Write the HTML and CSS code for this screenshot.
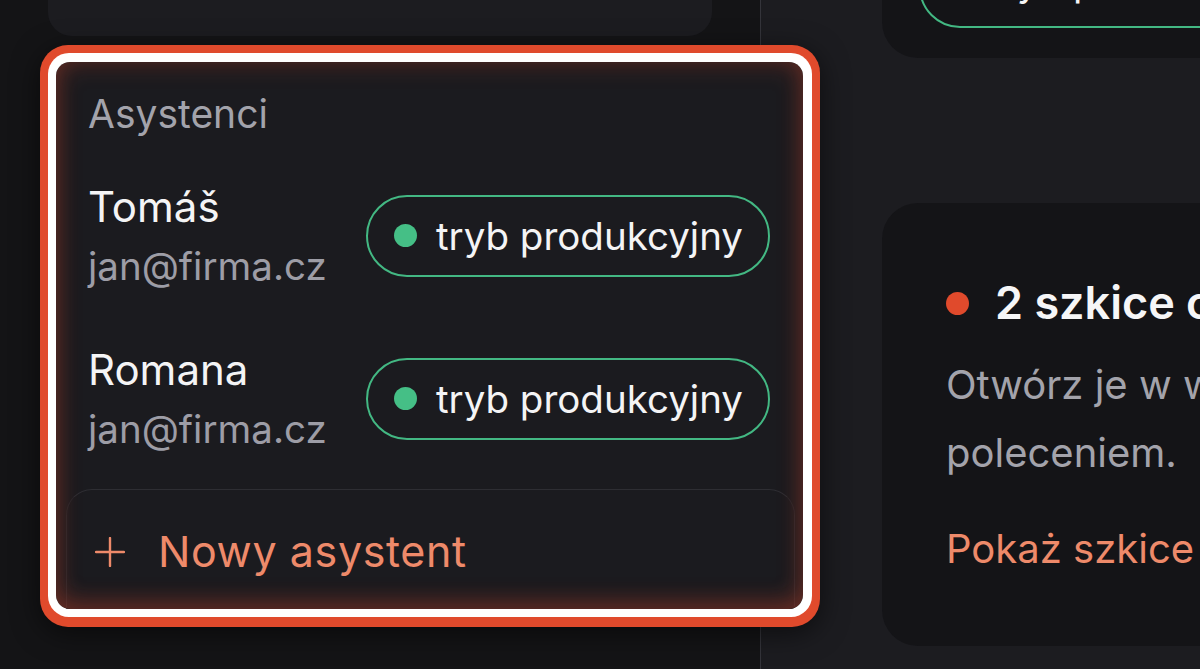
FILE: index.html
```html
<!DOCTYPE html>
<html lang="pl">
<head>
<meta charset="utf-8">
<title>Asystenci</title>
<link rel="stylesheet" href="styles.css">
</head>
<body>
<div class="app">
  <aside class="sidebar">
    <div class="side-card">
      <span class="side-card-text">Szukaj w projekcie</span>
    </div>

    <div class="hl">
      <div class="hl-ring">
        <section class="panel">
          <h2 class="panel-title">Asystenci</h2>
          <ul class="list">
            <li class="row">
              <div class="who">
                <div class="name">Tomáš</div>
                <div class="mail">jan@firma.cz</div>
              </div>
              <span class="pill"><span class="dot"></span>tryb produkcyjny</span>
            </li>
            <li class="row">
              <div class="who">
                <div class="name">Romana</div>
                <div class="mail">jan@firma.cz</div>
              </div>
              <span class="pill"><span class="dot"></span>tryb produkcyjny</span>
            </li>
          </ul>
          <div class="new">
            <svg class="plus" viewBox="0 0 30 30" width="30" height="30" aria-hidden="true">
              <path d="M15 1v28M1 15h28" fill="none" stroke="currentColor" stroke-width="2.4" stroke-linecap="round"/>
            </svg>
            <span>Nowy asystent</span>
          </div>
        </section>
      </div>
    </div>

    <div class="side-item">
      <svg class="user" viewBox="0 0 24 24" width="30" height="30" aria-hidden="true">
        <circle cx="12" cy="7" r="4" fill="none" stroke="currentColor" stroke-width="2"/>
        <path d="M4 21c0-4 4-6 8-6s8 2 8 6" fill="none" stroke="currentColor" stroke-width="2"/>
      </svg>
      <span>Ustawienia konta</span>
    </div>
  </aside>

  <main class="main">
    <div class="card card-top">
      <span class="pill pill-top"><span class="dot"></span>tryb produkcyjny</span>
    </div>
    <div class="card drafts">
      <div class="drafts-title"><span class="dot dot-red"></span>2 szkice czekają na przegląd</div>
      <p class="drafts-text">Otwórz je w widoku szkiców lub zatwierdź<br>poleceniem.</p>
      <div class="drafts-link">Pokaż szkice →</div>
    </div>
  </main>
</div>
</body>
</html>
```

FILE: styles.css
```css
* { box-sizing: border-box; }

html, body {
  margin: 0;
  height: 669px;
  overflow: hidden;
  background: #141416;
  font-family: Inter, "Noto Sans", sans-serif;
  color: #f4f4f5;
}

.app {
  display: flex;
  height: 669px;
}

.sidebar {
  flex: none;
  width: 761px;
  padding: 0 48px;
  border-right: 1px solid #34343a;
  background: #141416;
}

.side-card {
  height: 100px;
  margin-top: -64px;
  padding: 12px 0 0 40px;
  border-radius: 24px;
  background: #1c1c20;
  font-size: 40px;
  line-height: 48px;
  color: #c8cdd8;
}

.side-card-text { display: block; }

/* highlighted panel */
.hl {
  position: relative;
  z-index: 2;
  width: 780px;
  margin: 9px 0 0 -8px;
  padding: 8px 8px 10px 8px;
  border-radius: 28px;
  background: #e04a2c;
  box-shadow: 0 6px 28px rgba(0, 0, 0, 0.55);
}

.hl-ring {
  padding: 9px 9px 8px 8px;
  border-radius: 21px;
  background: #ffffff;
}

.panel {
  position: relative;
  height: 547px;
  overflow: hidden;
  border-radius: 14px;
  background: #1b1b1f;
  padding: 28px 0 0 0;
}

.panel::after {
  content: "";
  position: absolute;
  inset: 0;
  border-radius: 14px;
  box-shadow: inset 0 0 26px rgba(214, 72, 44, 0.32), inset 0 -10px 22px rgba(214, 72, 44, 0.2);
  pointer-events: none;
}

.panel-title {
  margin: 0;
  padding-left: 32px;
  font-size: 39px;
  line-height: 48px;
  font-weight: 400;
  color: #a3a3ab;
}

.list {
  list-style: none;
  margin: 43px 0 0 0;
  padding: 0 33px 0 32px;
  display: flex;
  flex-direction: column;
  gap: 54px;
}

.row {
  display: flex;
  align-items: center;
  justify-content: space-between;
}

.name {
  font-size: 42px;
  line-height: 52px;
  font-weight: 400;
  color: #f4f4f5;
}

.mail {
  margin-top: 9px;
  font-size: 38.5px;
  line-height: 48px;
  color: #9d9da6;
}

.pill {
  display: inline-flex;
  align-items: center;
  gap: 19px;
  height: 82px;
  padding: 0 25px 0 26px;
  border: 2px solid #43b883;
  border-radius: 999px;
  font-size: 38.5px;
  color: #f4f4f5;
  white-space: nowrap;
}

.pill-top { padding-bottom: 11px; }

.dot {
  flex: none;
  width: 23px;
  height: 23px;
  border-radius: 50%;
  background: #45bf86;
}

.new {
  display: flex;
  align-items: flex-start;
  gap: 33px;
  height: 200px;
  margin: 36px 8px 0 10px;
  padding: 35px 0 0 28px;
  border-top: 1px solid #2e2e33;
  border-left: 1px solid #26262b;
  border-right: 1px solid #26262b;
  border-radius: 26px 26px 0 0;
  background: #1b1b1f;
  font-size: 43px;
  line-height: 52px;
  letter-spacing: 0.6px;
  color: #ee8a6a;
}

.plus {
  flex: none;
  margin-top: 12px;
  color: #ee8a6a;
}

.side-item {
  display: flex;
  align-items: center;
  gap: 30px;
  margin-top: 36px;
  padding-left: 44px;
  font-size: 40px;
  line-height: 48px;
  color: #9d9da6;
}

.user { color: #9d9da6; }

/* main */
.main {
  flex: 1;
  min-width: 0;
  background: #1c1c20;
  padding-left: 121px;
}

.card {
  width: 560px;
  border-radius: 36px;
  background: #141417;
}

.card-top {
  height: 142px;
  margin-top: -84px;
  padding: 30px 0 0 37px;
}

.drafts {
  height: 443px;
  margin-top: 145px;
  padding: 72px 0 0 64px;
}

.drafts-title {
  display: flex;
  align-items: center;
  gap: 26px;
  font-size: 45px;
  line-height: 56px;
  font-weight: 600;
  color: #f6f6f7;
  white-space: nowrap;
}

.dot-red { background: #e04a2c; }

.drafts-text {
  margin: 20px 0 0 0;
  font-size: 40px;
  line-height: 68px;
  color: #a3a3ab;
  white-space: nowrap;
}

.drafts-link {
  margin-top: 38px;
  font-size: 40px;
  line-height: 48px;
  color: #ee8a6a;
  white-space: nowrap;
}
```
